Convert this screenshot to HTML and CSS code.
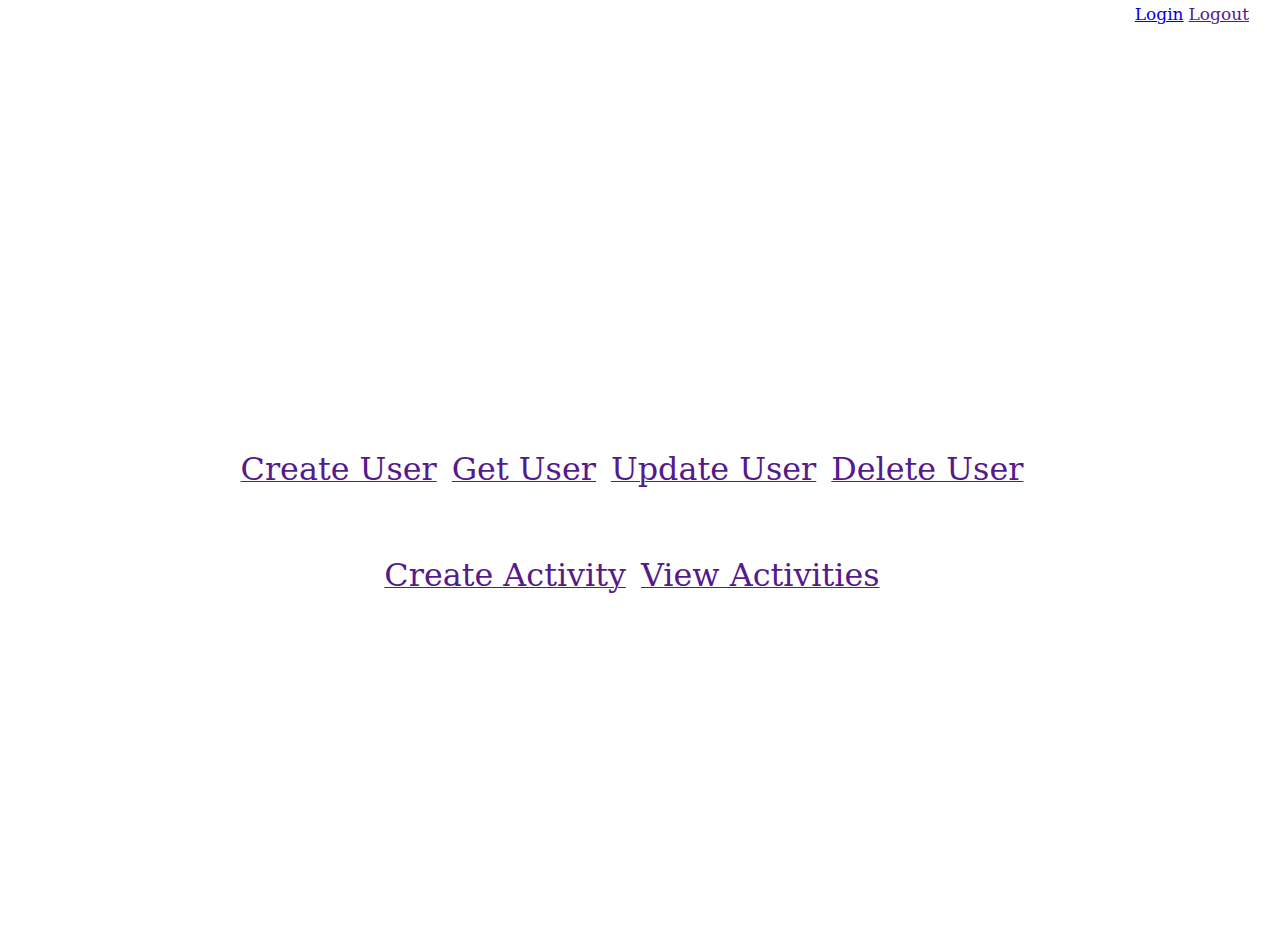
FILE: index.html
```html
<!DOCTYPE html>
<html>
<head>
<meta charset="utf-8">
<link rel="stylesheet" href="styles.css">
</head>
<body>
<nav class="topnav">
  <a class="unvisited" href="#login">Login</a>
  <a class="visited" href="#logout">Logout</a>
</nav>
<main class="menu">
  <div class="row">
    <a class="visited" href="#create-user">Create User</a>
    <a class="visited" href="#get-user">Get User</a>
    <a class="visited" href="#update-user">Update User</a>
    <a class="visited" href="#delete-user">Delete User</a>
  </div>
  <div class="row">
    <a class="visited" href="#create-activity">Create Activity</a>
    <a class="visited" href="#view-activities">View Activities</a>
  </div>
</main>
</body>
</html>
```

FILE: styles.css
```css
html, body {
  margin: 0;
  padding: 0;
  background: #ffffff;
  font-family: "DejaVu Serif", serif;
}
body {
  height: 939px;
  display: flex;
  flex-direction: column;
}
a {
  text-decoration-thickness: 1px;
}
.topnav {
  display: flex;
  justify-content: flex-end;
  gap: 5px;
  padding: 3px 25px 0 0;
  font-size: 17px;
  line-height: 22px;
}
.unvisited { color: #0000ee; }
.visited { color: #551a8b; }
.menu {
  display: flex;
  flex-direction: column;
  align-items: center;
  gap: 66px;
  padding: 424px 10px 0 0;
}
.row {
  display: flex;
  gap: 15px;
  font-size: 31.8px;
  line-height: 40px;
}
```
